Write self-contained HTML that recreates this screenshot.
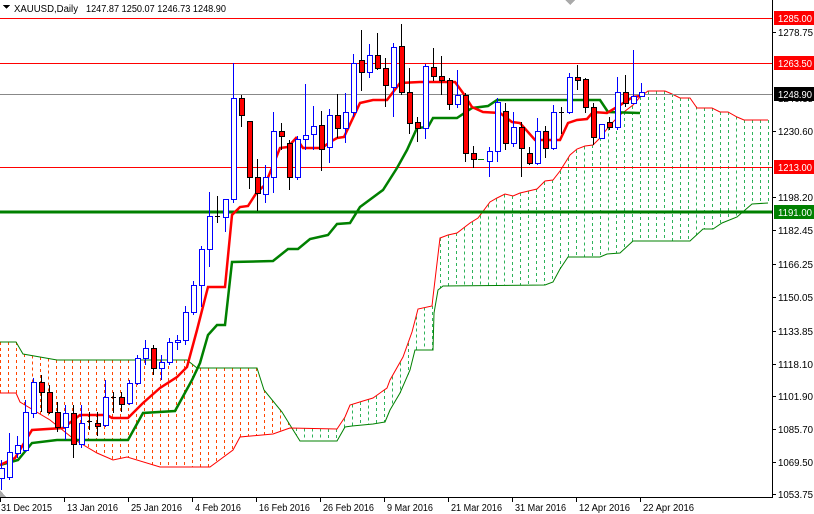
<!DOCTYPE html>
<html><head><meta charset="utf-8"><style>
html,body{margin:0;padding:0;background:#fff;width:814px;height:514px;overflow:hidden}
svg{display:block}
text{font-family:"Liberation Sans","DejaVu Sans",sans-serif;font-size:10px;fill:#000}
</style></head><body>
<svg id="s" width="814" height="514" viewBox="0 0 814 514" xmlns="http://www.w3.org/2000/svg" shape-rendering="crispEdges">
<g id="cloud"></g>
<line x1="0" y1="18.5" x2="772" y2="18.5" stroke="#f00" stroke-width="1"/>
<line x1="0" y1="63.5" x2="772" y2="63.5" stroke="#f00" stroke-width="1"/>
<line x1="0" y1="94.5" x2="772" y2="94.5" stroke="#888" stroke-width="1"/>
<line x1="0" y1="167.5" x2="772" y2="167.5" stroke="#f00" stroke-width="1"/>
<line x1="0" y1="212" x2="772" y2="212" stroke="#008000" stroke-width="3"/>
<g id="lines"></g>
<g id="candles"></g>
<line x1="772.5" y1="0" x2="772.5" y2="497" stroke="#000"/>
<line x1="0" y1="497.5" x2="773" y2="497.5" stroke="#000"/>
<polygon points="565,0 575,0 570,5" fill="#aaa"/>
<polygon points="0,490 0,497 6,497" fill="#aaa"/>
<g id="ticks" stroke="#000"></g>
<text x="14" y="12" textLength="64" lengthAdjust="spacingAndGlyphs">XAUUSD,Daily</text>
<text x="86" y="12" textLength="140" lengthAdjust="spacingAndGlyphs">1247.87 1250.07 1246.73 1248.90</text>
<polygon points="3,5 10,5 6.5,9" fill="#000"/>
<g id="plabels"></g>
<g id="dlabels"></g>
</svg>
<script>
const NS="http://www.w3.org/2000/svg";
function el(p,t,a,txt){const e=document.createElementNS(NS,t);for(const k in a)e.setAttribute(k,a[k]);if(txt!==undefined)e.textContent=txt;document.getElementById(p).appendChild(e);return e;}
function interp(arr,x){if(x<=arr[0][0])return arr[0][1];for(let i=1;i<arr.length;i++){if(x<=arr[i][0]){const a=arr[i-1],b=arr[i];return a[1]+(b[1]-a[1])*(x-a[0])/(b[0]-a[0]||1);}}return arr[arr.length-1][1];}
const oTop=[[0,342],[16,342],[23,354],[57,360],[187,360],[197,368],[257,368],[264,390],[282,412],[290,425]];
const oBot=[[0,393],[16,393],[20,402],[50,420],[75,440],[97,453],[113,460],[127,457],[160,467],[210,467],[233,450],[240,437],[273,434],[287,429],[290,428]];
const gTop=[[290,428],[337,429],[345,417],[350,405],[363,401],[373,398],[387,388],[390,380],[403,357],[412,332],[418,309],[432,306],[433,297],[440,238],[448,235],[457,233],[470,223],[478,218],[490,202],[497,198],[505,194],[513,196],[520,193],[537,189],[545,181],[553,180],[560,171],[570,155],[577,149],[585,146],[593,145],[600,138],[610,125],[620,115],[633,105],[640,97],[648,91],[665,91],[672,94],[680,98],[690,98],[697,108],[712,108],[720,112],[728,112],[737,117],[744,120],[768,120]];
const gBot=[[290,425],[300,441],[337,441],[345,427],[352,426],[373,424],[385,422],[390,410],[400,393],[410,370],[415,350],[433,350],[434,313],[438,290],[443,286],[545,285],[553,282],[560,269],[568,257],[600,257],[607,254],[620,253],[633,241],[690,241],[703,229],[713,229],[722,223],[737,217],[752,204],[768,203]];
for(let x=0;x<=768;x+=8){
 let t,b,c;
 if(x<=288){t=interp(oTop,x);b=interp(oBot,x);c="#ff4500";}
 else{t=interp(gTop,x);b=interp(gBot,x);c="#2eb35a";}
 el("cloud","line",{x1:x+.5,y1:t,x2:x+.5,y2:b,stroke:c,"stroke-dasharray":"3,3"});
}
const pts=a=>a.map(p=>p.join(",")).join(" ");
el("cloud","polyline",{points:pts(oTop.concat(gBot)),fill:"none",stroke:"#008000","stroke-width":1,"shape-rendering":"auto"});
el("cloud","polyline",{points:pts(oBot.concat(gTop)),fill:"none",stroke:"#f00","stroke-width":1,"shape-rendering":"auto"});
const tenkan=[[0,465],[15,458],[32,430],[63,428],[80,415],[107,415],[112,418],[128,418],[143,403],[160,388],[177,377],[187,367],[197,330],[208,287],[225,287],[232,215],[240,207],[248,206],[257,192],[265,185],[280,148],[288,147],[296,138],[303,148],[322,148],[330,142],[337,138],[344,137],[360,103],[373,100],[387,100],[400,83],[420,82],[455,82],[463,93],[472,107],[483,112],[500,113],[512,122],[520,123],[535,140],[560,140],[568,123],[577,120],[587,119],[593,112],[607,113],[617,107],[633,97],[640,96]];
const kijun=[[0,465],[18,460],[32,443],[57,440],[128,440],[143,413],[175,411],[192,380],[200,363],[208,335],[217,325],[225,325],[232,262],[273,261],[288,249],[298,249],[310,239],[328,235],[337,224],[350,223],[360,207],[383,190],[397,168],[407,150],[417,128],[428,127],[433,118],[457,118],[472,108],[488,106],[497,100],[600,100],[608,112],[640,113]];
el("lines","polyline",{points:pts(kijun),fill:"none",stroke:"#008000","stroke-width":2.5,"shape-rendering":"auto"});
el("lines","polyline",{points:pts(tenkan),fill:"none",stroke:"#f00","stroke-width":2.5,"shape-rendering":"auto"});
const C=[[460,468,478,490,'b'],[433,452,477,480,'b'],[436,445,453,458,'b'],[400,412,450,452,'b'],[378,382,413,418,'b'],[375,382,392,412,'r'],[385,392,412,414,'r'],[402,412,427,432,'r'],[405,413,427,440,'b'],[405,413,444,458,'r'],[405,423,444,448,'b'],[412,421,421,430,'x'],[412,423,426,436,'r'],[380,397,425,427,'b'],[392,397,397,413,'x'],[392,397,404,412,'r'],[380,383,403,405,'b'],[355,358,383,385,'b'],[340,348,358,365,'b'],[345,348,368,375,'r'],[355,362,368,380,'b'],[338,342,362,365,'b'],[335,340,342,350,'b'],[306,312,340,345,'b'],[281,285,312,315,'b'],[246,249,285,307,'b'],[192,216,249,267,'b'],[196,216,216,223,'x'],[199,199,217,232,'b'],[63,98,199,203,'b'],[95,98,115,127,'r'],[121,121,177,189,'r'],[159,177,193,211,'r'],[165,177,194,203,'b'],[112,131,177,193,'b'],[123,131,136,150,'r'],[140,143,177,190,'r'],[136,139,177,180,'b'],[84,135,139,150,'b'],[106,126,134,150,'b'],[111,125,149,171,'r'],[109,115,147,163,'b'],[94,115,128,138,'r'],[93,112,128,143,'b'],[54,63,112,117,'b'],[30,60,72,91,'r'],[44,55,72,78,'b'],[33,55,68,70,'r'],[58,68,85,107,'r'],[43,47,87,117,'b'],[24,46,92,95,'r'],[68,92,123,134,'r'],[117,122,128,142,'r'],[64,66,128,139,'b'],[48,67,76,81,'r'],[56,76,80,95,'r'],[78,80,104,110,'r'],[70,95,104,108,'b'],[93,95,153,162,'r'],[146,153,159,168,'r'],null,[147,151,161,177,'b'],[98,102,151,162,'b'],[103,111,143,150,'r'],[112,127,143,147,'b'],[122,127,148,177,'r'],[147,153,163,165,'r'],[118,131,163,165,'b'],[126,131,148,158,'r'],[105,112,148,150,'b'],[107,112,112,134,'x'],[73,77,112,114,'b'],[65,77,80,90,'r'],[78,79,107,113,'r'],[103,107,137,145,'r'],[124,124,138,138,'b'],[117,122,127,130,'r'],[77,92,127,130,'b'],[75,92,103,107,'r'],[50,96,103,104,'b'],[83,92,96,97,'b']];
C.forEach((c,i)=>{
 const x=8*i+1;
 if(!c){el("candles","line",{x1:x-3,y1:159.5,x2:x+3,y2:159.5,stroke:"#008000"});return;}
 const [h,t,b,l,k]=c;
 const col=k==='b'?"#0000ff":"#000";
 el("candles","line",{x1:x+.5,y1:h,x2:x+.5,y2:l,stroke:col});
 if(k==='x'){el("candles","line",{x1:x-2,y1:t+.5,x2:x+3,y2:t+.5,stroke:"#000"});return;}
 el("candles","rect",{x:x-1.5,y:t+.5,width:5,height:Math.max(1,b-t),fill:k==='b'?"#fff":"#f00",stroke:col});
});
const P=[["1278.75",32],["1230.60",131],["1198.20",197],["1182.45",230],["1166.25",264],["1150.05",297],["1133.85",331],["1118.10",364],["1101.90",396],["1085.70",429],["1069.50",462],["1053.75",494]];
P.forEach(([t,y])=>{el("ticks","line",{x1:772,y1:y+.5,x2:776,y2:y+.5});el("plabels","text",{x:778,y:y+4,textLength:35,lengthAdjust:"spacingAndGlyphs"},t);});
el("plabels","text",{x:778,y:102,textLength:35,lengthAdjust:"spacingAndGlyphs"},"1246.35");
[["1285.00",18,"#f00","#fff"],["1263.50",63,"#f00","#fff"],["1248.90",94,"#000","#fff"],["1213.00",167,"#f00","#fff"],["1191.00",212,"#008000","#fff"]].forEach(([t,y,bg,fg])=>{
 el("plabels","rect",{x:774,y:y-7,width:40,height:14,fill:bg});
 el("plabels","text",{x:778,y:y+4,textLength:34,lengthAdjust:"spacingAndGlyphs",style:"fill:"+fg},t);
});
const D=["31 Dec 2015","13 Jan 2016","25 Jan 2016","4 Feb 2016","16 Feb 2016","26 Feb 2016","9 Mar 2016","21 Mar 2016","31 Mar 2016","12 Apr 2016","22 Apr 2016"];
D.forEach((d,i)=>{const x=64*i;el("ticks","line",{x1:x+.5,y1:497,x2:x+.5,y2:502});
 el("dlabels","text",{x:x+(i==0?1:3),y:511,textLength:d.length>10?51:46,lengthAdjust:"spacingAndGlyphs"},d);});
</script>
</body></html>
